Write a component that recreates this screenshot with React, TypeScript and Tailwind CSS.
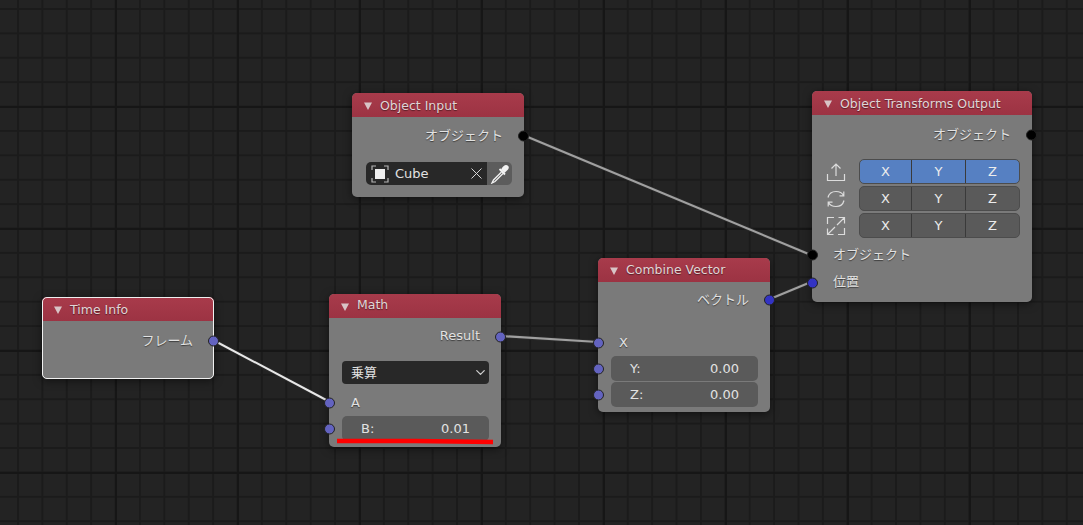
import { ReactNode } from "react";
import { ChevronDown, X } from "lucide-react";

const font = "font-['DejaVu_Sans','Noto_Sans_CJK_JP',sans-serif]";

function Socket({ side, color = "bg-[#6363c0]" }: { side: "left" | "right"; color?: string }) {
  return (
    <span
      className={`absolute top-[calc(50%+0.5px)] -translate-y-1/2 w-[11px] h-[11px] rounded-full border border-[#222222] ${color} ${
        side === "left" ? "-left-[5px]" : "-right-[5px]"
      }`}
    />
  );
}

function Row({ h, side, color, children, className = "" }: { h: string; side?: "left" | "right"; color?: string; children?: ReactNode; className?: string }) {
  return (
    <div className={`relative flex items-center pt-[1px] ${h} ${className}`}>
      {side && <Socket side={side} color={color} />}
      {children}
    </div>
  );
}

function Node({ pos, title, titleClass = "", selected, children }: { pos: string; title: string; titleClass?: string; selected?: boolean; children: ReactNode }) {
  return (
    <div
      className={`absolute ${pos} flex flex-col rounded-[5px] shadow-[0_2px_8px_rgba(0,0,0,0.5)] bg-[#7f7f7f]/95 ${
        selected ? "outline outline-1 -outline-offset-1 outline-[#f0f0f0]" : ""
      }`}
    >
      <div className="flex items-center h-[24px] shrink-0 rounded-t-[5px] bg-[linear-gradient(#a83b4b,#9c3343)] pl-[12px] gap-[8px] text-[#e0d6d7] text-[12.500px] [text-shadow:0_1px_1px_rgba(0,0,0,0.45)]">
        <svg width="8" height="8" viewBox="0 0 8 8" className="shrink-0 mt-[2px]">
          <path d="M0 0.500H8L4 8Z" fill="#d8c4c6" />
        </svg>
        <span className={titleClass}>{title}</span>
      </div>
      {children}
    </div>
  );
}

function Label({ children, className = "" }: { children: ReactNode; className?: string }) {
  return <span className={`text-[13px] text-[#e2e2e2] [text-shadow:0_1px_1px_rgba(0,0,0,0.5)] ${className}`}>{children}</span>;
}

function NumField({ label, value }: { label: string; value: string }) {
  return (
    <div className="flex items-center justify-between w-full h-[25px] rounded-[5px] bg-[#5a5a5a] pl-[19px] pr-[19px] text-[13px] text-[#e2e2e2]">
      <span>{label}</span>
      <span>{value}</span>
    </div>
  );
}

function AxisRow({ active, icon }: { active?: boolean; icon: ReactNode }) {
  return (
    <div className="flex items-center h-[25px]">
      <span className="w-[47px] flex justify-center shrink-0">{icon}</span>
      <div
        className={`grid grid-cols-[51px_54px_54px] w-[161px] h-full rounded-[5px] border border-[#4c4c4c] text-[13px] text-[#ececec] overflow-hidden ${
          active ? "bg-[#5680c2]" : "bg-[#5a5a5a]"
        }`}
      >
        {["X", "Y", "Z"].map((axis, i) => (
          <span key={axis} className={`flex items-center justify-center ${i > 0 ? "border-l border-[#3a3a3a]" : ""}`}>
            {axis}
          </span>
        ))}
      </div>
    </div>
  );
}

const iconProps = {
  width: 20,
  height: 20,
  viewBox: "0 0 20 20",
  fill: "none",
  stroke: "#dcdcdc",
  strokeWidth: 1.2,
};

function MoveIcon() {
  return (
    <svg {...iconProps}>
      <path d="M10 14V2M5.500 6.500L10 2l4.500 4.500M1.500 12v6.500h17V12" />
    </svg>
  );
}

function RotateIcon() {
  return (
    <svg {...iconProps}>
      <path d="M2 8.500C3 4.500 6 2.500 10 2.500s6.500 2 7.500 4M17.800 2.500v4.300h-4.300M18 11.500c-1 4-4 6-8 6s-6.500-2-7.500-4M2.200 17.500v-4.300h4.300" />
    </svg>
  );
}

function ScaleIcon() {
  return (
    <svg {...iconProps}>
      <path d="M11 9l7-7M12.500 1.500h6v6M9 11l-7 7M1.500 12.500v6h6M8 1.500H1.500V8M12 18.500h6.500V12" />
    </svg>
  );
}

function DropperIcon() {
  return (
    <svg width="20" height="20" viewBox="0 0 20 20" fill="none">
      <path d="M11 5.500l3.500 3.500 2-2c1-1 2.300-2 2.300-3.500C18.800 2 17.500 1 16 1c-1.500 0-2.500 1.300-3.500 2.300z" fill="#f2f2f2" />
      <path d="M9.500 5l5.500 5.500" stroke="#f2f2f2" strokeWidth="1.800" />
      <path d="M11.500 8L3.500 16l-1.500 3 3-1.500 8-8" stroke="#f2f2f2" strokeWidth="1.300" />
    </svg>
  );
}

export default function App() {
  return (
    <div
      className={`relative w-[1083px] h-[525px] overflow-hidden bg-[#232323] ${font} bg-[linear-gradient(to_right,#161616_1.500px,transparent_1.500px),linear-gradient(to_bottom,#161616_1.500px,transparent_1.500px),linear-gradient(to_right,#1b1b1b_1.500px,transparent_1.500px),linear-gradient(to_bottom,#1b1b1b_1.500px,transparent_1.500px)] bg-[size:122px_122px,122px_122px,24.4px_24.4px,24.4px_24.4px] bg-[position:115px_0,0_106px,17px_0,0_8px]`}
    >
      {/* wires between sockets */}
      <svg width="1083" height="525" className="absolute inset-0" fill="none" strokeLinecap="round">
        <g stroke="#2a2a2a" strokeWidth="4">
          <path d="M523 135L811 255" />
          <path d="M501 336L598 342" />
          <path d="M770 299L811 282" />
          <path d="M213 340L330 402" />
        </g>
        <g stroke="#a0a0a0" strokeWidth="2.200">
          <path d="M523 135L811 255" />
          <path d="M501 336L598 342" />
          <path d="M770 299L811 282" />
        </g>
        <path d="M213 340L330 402" stroke="#e8e8e8" strokeWidth="2" />
      </svg>

      <Node pos="left-[352px] top-[93px] w-[172px] h-[104px]" title="Object Input" titleClass="pt-[2px]">
        <Row h="h-[36px]" side="right" color="bg-black" className="justify-end pr-[21px]">
          <Label>オブジェクト</Label>
        </Row>
        <div className="flex h-[23px] ml-[14px] mr-[12px] mt-[9px] rounded-[5px] overflow-hidden text-[13px] text-[#e2e2e2]">
          <div className="flex items-center flex-1 bg-[#282828] pl-[5px] pr-[1px] gap-[6px]">
            <svg width="18" height="18" viewBox="0 0 18 18" fill="none" className="shrink-0">
              <path d="M1 5V1h4M13 1h4v4M17 13v4h-4M5 17H1v-4" stroke="#b5b5b5" strokeWidth="1.200" />
              <rect x="4" y="4" width="10" height="10" fill="#eeeeee" />
            </svg>
            <span className="flex-1">Cube</span>
            <X size={19} strokeWidth={1.200} className="text-[#dedede]" />
          </div>
          <div className="flex items-center justify-center w-[25px] bg-[#5c5c5c]">
            <DropperIcon />
          </div>
        </div>
      </Node>

      <Node pos="left-[812px] top-[91px] w-[220px] h-[211px]" title="Object Transforms Output" titleClass="pt-[2px]">
        <Row h="h-[39px]" side="right" color="bg-black" className="justify-end pr-[21px]">
          <Label>オブジェクト</Label>
        </Row>
        <div className="flex flex-col gap-[2px] mt-[5px]">
          <AxisRow active icon={<MoveIcon />} />
          <AxisRow icon={<RotateIcon />} />
          <AxisRow icon={<ScaleIcon />} />
        </div>
        <Row h="h-[27px]" side="left" color="bg-black" className="pl-[21px] mt-[3px]">
          <Label>オブジェクト</Label>
        </Row>
        <Row h="h-[26px]" side="left" color="bg-[#3333c4]" className="pl-[21px] pb-[1px] mt-[1px]">
          <Label>位置</Label>
        </Row>
      </Node>

      <Node pos="left-[598px] top-[258px] w-[172px] h-[154px]" title="Combine Vector">
        <Row h="h-[34px]" side="right" color="bg-[#3333c4]" className="justify-end pr-[21px]">
          <Label>ベクトル</Label>
        </Row>
        <Row h="h-[26px]" side="left" className="pl-[21px] mt-[13px]">
          <Label>X</Label>
        </Row>
        <Row h="h-[26px]" side="left" className="pl-[13px] pr-[12px]">
          <NumField label="Y:" value="0.00" />
        </Row>
        <Row h="h-[26px]" side="left" className="pl-[13px] pr-[12px]">
          <NumField label="Z:" value="0.00" />
        </Row>
      </Node>

      <Node pos="left-[329px] top-[294px] w-[172px] h-[153px]" title="Math" titleClass="pb-[2px]">
        <Row h="h-[36px]" side="right" className="justify-end pr-[21px] pb-[1px]">
          <Label>Result</Label>
        </Row>
        <div className="flex items-center justify-between h-[23px] ml-[13px] mr-[12px] mt-[7px] pl-[9px] pr-[1px] rounded-[4px] bg-[#282828] text-[13px] text-[#e2e2e2]">
          <span>乗算</span>
          <ChevronDown size={15} className="text-[#cfcfcf]" />
        </div>
        <Row h="h-[26px]" side="left" className="pl-[22px] mt-[5px]">
          <Label>A</Label>
        </Row>
        <Row h="h-[26px]" side="left" className="pl-[13px] pr-[12px]">
          <NumField label="B:" value="0.01" />
        </Row>
      </Node>

      <Node pos="left-[42px] top-[297px] w-[172px] h-[82px]" title="Time Info" titleClass="pt-[2px]" selected>
        <Row h="h-[38px]" side="right" className="justify-end pr-[21px]">
          <Label>フレーム</Label>
        </Row>
      </Node>

      {/* hand drawn underline on top of the screenshot */}
      <svg width="1083" height="525" className="absolute inset-0" fill="none">
        <path d="M337 441H415L493 442" stroke="#ff0000" strokeWidth="4.500" />
      </svg>
    </div>
  );
}
